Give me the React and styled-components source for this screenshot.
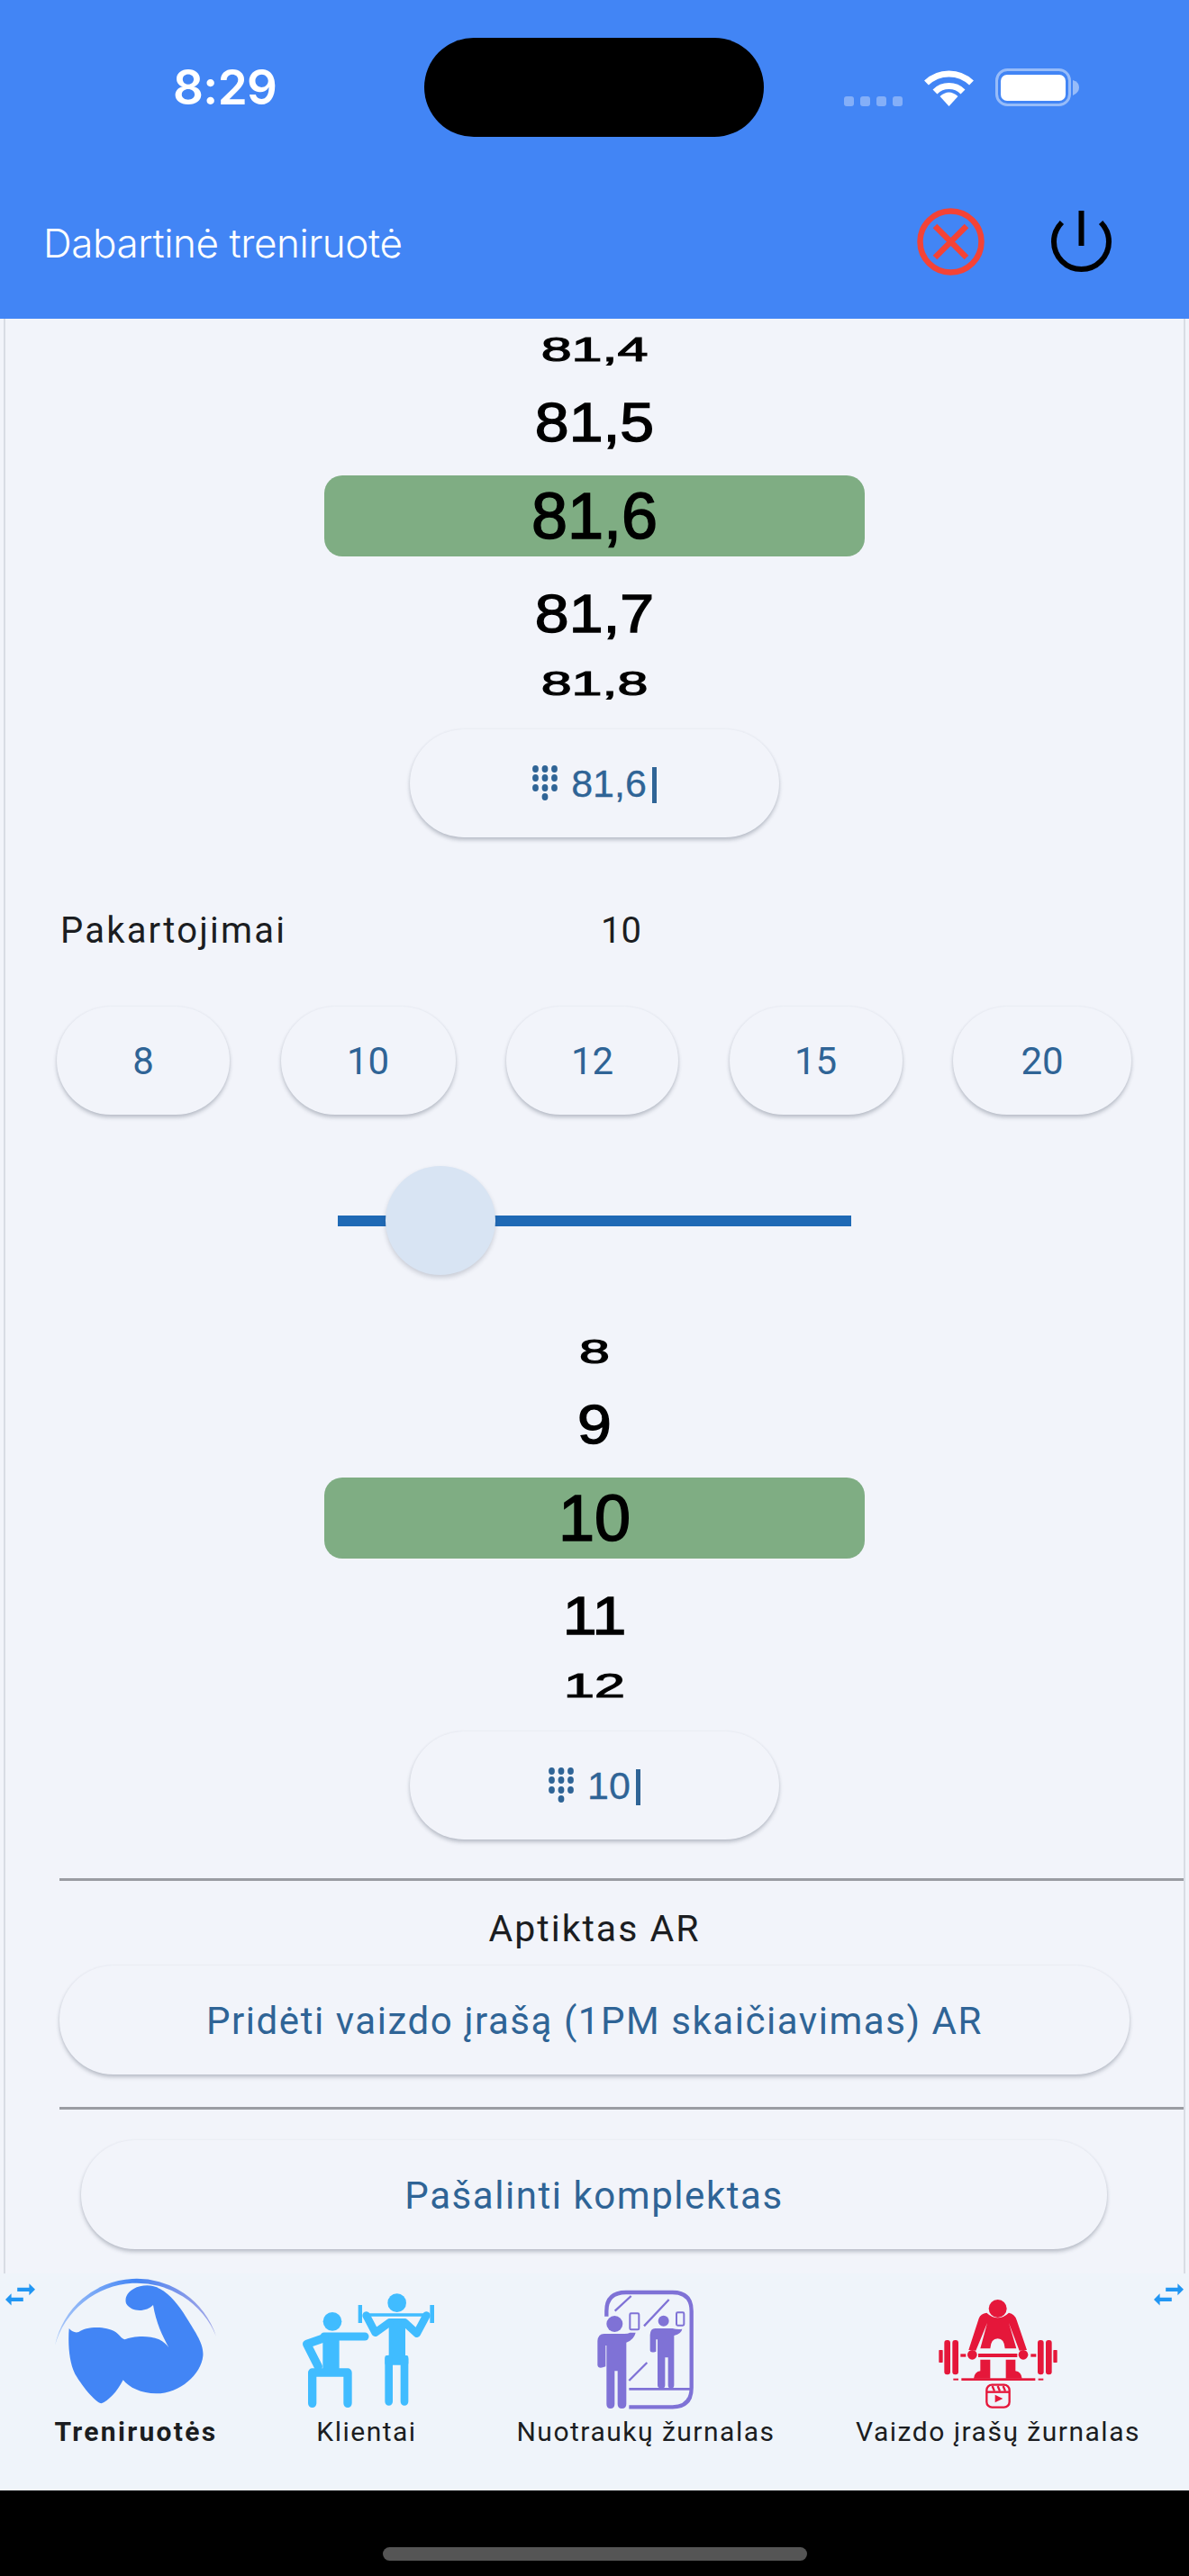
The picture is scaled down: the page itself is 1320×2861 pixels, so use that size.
import React from 'react';
import styled, { createGlobalStyle } from 'styled-components';

const Global = createGlobalStyle`
  html, body { margin: 0; padding: 0; background: #000; }
  * { box-sizing: border-box; }
`;

const Page = styled.div`
  width: 1320px;
  height: 2861px;
  display: flex;
  flex-direction: column;
  background: #000;
  overflow: hidden;
`;

const Header = styled.header`
  height: 354px;
  flex: none;
  background: #4285f5;
  display: flex;
  flex-direction: column;
`;

const StatusRow = styled.div`
  height: 110px;
  margin-top: 42px;
  padding-left: 192px;
  display: flex;
  align-items: center;
`;

const Time = styled.div`
  width: 279px;
  font: 600 53px/1 Inter, "Liberation Sans", sans-serif;
  letter-spacing: -0.6px;
  color: #fff;
`;

const Island = styled.div`
  width: 377px;
  height: 110px;
  border-radius: 55px;
  background: #000;
  flex: none;
`;

const StatusIcons = styled.div`
  margin-left: 89px;
  height: 42px;
  display: flex;
  align-items: flex-end;
  gap: 23px;
`;

const SignalDots = styled.div`
  width: 65px;
  height: 11px;
  display: flex;
  justify-content: space-between;
`;

const SignalDot = styled.span`
  width: 11px;
  height: 11px;
  border-radius: 3px;
  background: rgba(255, 255, 255, 0.35);
`;

const AppBar = styled.div`
  height: 160px;
  margin-top: 42px;
  padding: 0 86px 11px 48px;
  display: flex;
  align-items: center;
  gap: 74px;
`;

const Title = styled.h1`
  flex: 1;
  margin: 0;
  padding-top: 4px;
  font: 300 44px/1.2 Inter, "Liberation Sans", sans-serif;
  letter-spacing: -0.4px;
  color: #fff;
`;

const Main = styled.main`
  height: 2171px;
  flex: none;
  background: #f2f4fa;
  border-left: 4px solid #f2f4fa;
  border-right: 4px solid #f2f4fa;
  padding: 0 2px;
  box-shadow: inset 2px 0 0 #d8dce4, inset -2px 0 0 #d8dce4;
  display: flex;
  flex-direction: column;
  overflow: hidden;
`;

const Wheel = styled.div`
  width: 600px;
  height: 434px;
  margin: 0 auto;
  flex: none;
  display: flex;
  flex-direction: column;
`;

const WheelItem = styled.div`
  height: ${p => p.$h}px;
  margin: ${p => (p.$active ? '14px 0' : '0')};
  flex: none;
  display: flex;
  align-items: center;
  justify-content: center;
  border-radius: 20px;
  background: ${p => (p.$active ? '#7fad83' : 'transparent')};
`;

const WheelText = styled.span`
  display: block;
  font: 400 ${p => p.$size}px/1 "Liberation Sans", Arial, sans-serif;
  -webkit-text-stroke: ${p => p.$stroke}px #000;
  color: #000;
  transform: scaleY(${p => p.$sy});
`;

const InputButton = styled.div`
  width: 410px;
  height: 120px;
  margin: 22px auto 0;
  flex: none;
  border-radius: 60px;
  background: #f2f4fa;
  box-shadow: 0 3px 4px rgba(60, 70, 90, 0.3), 0 0 3px rgba(60, 70, 90, 0.05);
  display: flex;
  align-items: center;
  justify-content: center;
  gap: 15px;
  color: #2f6496;
  font: 400 43px/1 "Liberation Sans", Arial, sans-serif;
  -webkit-text-stroke: 0.3px #2f6496;
`;

const Cursor = styled.span`
  display: inline-block;
  width: 5px;
  height: 40px;
  margin-left: 6px;
  vertical-align: -7px;
  background: #2f6496;
`;

const RepsRow = styled.div`
  margin: 79px 0 59px 61px;
  height: 50px;
  flex: none;
  display: flex;
  align-items: center;
  font: 400 40px/50px Roboto, sans-serif;
  color: #1b1d21;
`;

const RepsLabel = styled.span`
  width: 600px;
  letter-spacing: 2.2px;
`;

const ChipRow = styled.div`
  margin-left: 57px;
  height: 120px;
  flex: none;
  display: flex;
  gap: 56.5px;
`;

const Chip = styled.div`
  width: ${p => p.$w}px;
  height: 120px;
  padding-top: 2px;
  border-radius: 60px;
  background: #f2f4fa;
  box-shadow: 0 3px 4px rgba(60, 70, 90, 0.3), 0 0 3px rgba(60, 70, 90, 0.05);
  display: flex;
  align-items: center;
  justify-content: center;
  color: #2f6496;
  font: 400 42px/1 Roboto, sans-serif;
`;

const Slider = styled.div`
  position: relative;
  width: 570px;
  height: 121px;
  margin: 57px auto 51px;
  flex: none;
  display: flex;
  align-items: center;
`;

const SliderTrack = styled.div`
  width: 100%;
  height: 12px;
  background: #1f69b5;
`;

const SliderThumb = styled.div`
  position: absolute;
  left: 53px;
  top: 0;
  width: 122px;
  height: 121px;
  border-radius: 50%;
  background: #d8e4f3;
  box-shadow: 0 3px 5px rgba(60, 70, 90, 0.22);
`;

const Divider = styled.hr`
  margin: ${p => p.$top}px 0 0 60px;
  height: 3px;
  flex: none;
  border: 0;
  background: #9a9ca2;
`;

const DetectedText = styled.div`
  margin-top: 28px;
  height: 50px;
  flex: none;
  text-align: center;
  font: 400 41px/50px Roboto, sans-serif;
  letter-spacing: 2px;
  color: #1b1d21;
`;

const WideButton = styled.div`
  width: ${p => p.$w}px;
  height: 121px;
  padding-top: 2px;
  margin: ${p => p.$top}px 0 0 ${p => p.$left}px;
  flex: none;
  border-radius: 60px;
  background: #f2f4fa;
  box-shadow: 0 3px 4px rgba(60, 70, 90, 0.3), 0 0 3px rgba(60, 70, 90, 0.05);
  display: flex;
  align-items: center;
  justify-content: center;
  color: #2f6496;
  font: 400 42px/1 Roboto, sans-serif;
  letter-spacing: 1.55px;
`;

const Nav = styled.nav`
  position: relative;
  height: 241px;
  flex: none;
  background: #eff4fa;
  display: grid;
  grid-template-columns: 302px 210px 410px 372px 26px;
`;

const NavItem = styled.div`
  display: flex;
  flex-direction: column;
  align-items: center;
  min-width: 0;
`;

const NavIcon = styled.svg`
  width: 260px;
  height: 155px;
  flex: none;
  overflow: visible;
`;

const NavLabel = styled.span`
  margin-top: 1px;
  white-space: nowrap;
  font: ${p => (p.$active ? 700 : 400)} 30px/40px Roboto, sans-serif;
  letter-spacing: ${p => (p.$active ? '2.3px' : '1.5px')};
  color: #1b1d21;
`;

const SwapIcon = styled.svg`
  position: absolute;
  top: 11px;
  left: ${p => p.$left}px;
  width: 33px;
  height: 25px;
`;

const Bottom = styled.div`
  flex: 1;
  padding-top: 63px;
  display: flex;
  justify-content: center;
`;

const HomeIndicator = styled.div`
  width: 471px;
  height: 15px;
  border-radius: 8px;
  background: #555;
`;

const WifiIcon = () => (
  <svg width="57" height="41" viewBox="0 0 57 41" fill="none" stroke="#fff" strokeWidth="7">
    <path d="M3.5 15 A36 36 0 0 1 53.5 15" />
    <path d="M13 25 A22 22 0 0 1 44 25" />
    <path d="M28.5 41 L18.5 30 Q28.5 21 38.5 30 Z" fill="#fff" stroke="none" />
  </svg>
);

const BatteryIcon = () => (
  <svg width="93" height="42" viewBox="0 0 93 42">
    <rect x="1.5" y="1.5" width="81" height="39" rx="12" fill="none" stroke="rgba(255,255,255,.45)" strokeWidth="3" />
    <rect x="6" y="7" width="72" height="29" rx="7" fill="#fff" />
    <path d="M86 13 Q93 15 93 21 Q93 27 86 30 Z" fill="rgba(255,255,255,.45)" />
  </svg>
);

const CloseIcon = () => (
  <svg width="75" height="75" viewBox="0 0 75 75" fill="none" stroke="#f44336" strokeWidth="6.5">
    <circle cx="37.5" cy="37.5" r="34" />
    <path d="M20 20 L55 55 M55 20 L20 55" />
  </svg>
);

const PowerIcon = () => (
  <svg width="67" height="70" viewBox="0 0 67 70" fill="none" stroke="#000" strokeWidth="6">
    <path d="M33.5 0 V39" />
    <path d="M11.9 13 A30.5 30.5 0 1 0 55.1 13" />
  </svg>
);

const dialDots = [
  [3.5, 4], [14, 4], [24.5, 4],
  [3.5, 14], [14, 14], [24.5, 14],
  [3.5, 25], [14, 25], [24.5, 25],
  [14, 35],
];

const DialIcon = () => (
  <svg width="28" height="40" viewBox="0 0 28 40" fill="#2f6496" stroke="none">
    {dialDots.map(([cx, cy]) => (
      <ellipse key={`${cx}-${cy}`} cx={cx} cy={cy} rx="3.4" ry="3.9" />
    ))}
  </svg>
);

const MuscleIcon = () => (
  <NavIcon viewBox="63 45 780 465">
    <defs>
      <linearGradient id="arcGrad" x1="0" x2="1" y1="0" y2="0">
        <stop offset="0" stopColor="#4285f5" stopOpacity="0.4" />
        <stop offset="0.5" stopColor="#4285f5" />
        <stop offset="1" stopColor="#5a62d8" stopOpacity="0.5" />
      </linearGradient>
    </defs>
    <path d="M183 285 A278 278 0 0 1 720 255 A284 284 0 0 0 183 285 Z" fill="url(#arcGrad)" />
    <path
      fill="#4285f5"
      d="M230 228 Q245 245 262 240 C285 222 350 218 385 240 C398 250 405 262 415 265 C440 255 490 248 530 265 C545 272 555 282 562 292 C540 250 520 210 510 150 C490 172 440 178 420 145 C410 110 450 85 490 85 C540 85 580 130 610 175 C650 240 680 280 676 320 C670 380 600 445 520 445 C470 445 430 425 410 400 C390 440 360 470 338 478 C320 475 280 430 250 380 C230 340 226 280 230 228 Z"
    />
  </NavIcon>
);

const TrainerIcon = () => (
  <NavIcon viewBox="-99 15 780 465">
    <g fill="#40bcff" stroke="none">
      <circle cx="177" cy="175" r="31" />
      <circle cx="392" cy="113" r="31" />
      <rect x="263" y="120" width="13" height="60" />
      <rect x="502" y="120" width="14" height="60" />
      <rect x="145" y="213" width="55" height="125" />
      <rect x="365" y="165" width="55" height="135" />
      <rect x="352" y="288" width="78" height="32" rx="6" />
    </g>
    <g fill="none" stroke="#40bcff" strokeLinecap="round" strokeLinejoin="round">
      <path d="M150 225 H285" strokeWidth="27" />
      <path d="M150 230 L92 250 L130 325" strokeWidth="28" />
      <path d="M110 345 H228 M110 345 V448 M228 345 V448" strokeWidth="28" />
      <path d="M290 153 H490" strokeWidth="11" />
      <path d="M290 155 L320 212 L368 178 M490 155 L458 215 L418 178" strokeWidth="26" />
      <path d="M365 300 V442 M417 300 V442" strokeWidth="26" />
    </g>
  </NavIcon>
);

const MirrorIcon = () => (
  <NavIcon viewBox="-159 -15 780 465">
    <g fill="none" stroke="#7f72d6">
      <path d="M100 128 V110 Q100 48 165 48 H320 Q383 48 383 110 V365 Q383 430 320 430 H175" strokeWidth="13" />
      <path d="M128 110 L182 60 M225 160 L308 72 M175 342 L235 282" strokeWidth="7" />
      <path d="M175 370 H378" strokeWidth="8" />
      <rect x="178" y="118" width="30" height="54" rx="4" strokeWidth="6" />
      <rect x="333" y="115" width="25" height="43" rx="4" strokeWidth="6" />
    </g>
    <g fill="#7f72d6">
      <circle cx="127" cy="153" r="27" />
      <circle cx="290" cy="143" r="18" />
      <path d="M92 186 H160 Q172 186 178 182 H197 Q192 205 166 215 V420 Q166 435 151 435 Q137 435 137 420 V310 H127 V420 Q127 435 113 435 Q100 435 100 420 V225 H97 V295 Q72 305 70 290 V210 Q72 186 92 186 Z" />
      <path d="M262 168 H320 Q335 172 352 170 Q350 185 325 192 V358 Q325 368 315 368 Q305 368 305 358 V265 H295 V358 Q295 368 285 368 Q270 368 270 358 V205 H265 V245 Q245 252 245 240 V190 Q246 168 262 168 Z" />
    </g>
  </NavIcon>
);

const LifterIcon = () => (
  <NavIcon viewBox="-126 -45 780 465">
    <g fill="#e5173a">
      <circle cx="263" cy="72" r="30" />
      <path d="M226 86 Q263 120 300 86 Q320 90 326 110 L360 210 L335 212 L300 120 L325 205 H287 Q285 172 263 172 Q240 172 238 205 H205 L228 120 L190 212 L166 210 L200 105 Q206 88 226 86 Z" />
      <circle cx="178" cy="226" r="16" />
      <circle cx="348" cy="226" r="16" />
      <rect x="139" y="223" width="18" height="10" />
      <rect x="198" y="222" width="130" height="12" />
      <rect x="373" y="223" width="18" height="10" />
      <path d="M205 242 H238 V305 H183 Q186 282 205 280 Z" />
      <path d="M290 242 H322 V280 Q341 282 344 305 H290 Z" />
      <rect x="142" y="304" width="246" height="8" />
      <rect x="115" y="305" width="17" height="6" />
      <rect x="398" y="305" width="17" height="6" />
      <rect x="85" y="177" width="20" height="115" rx="9" />
      <rect x="112" y="177" width="20" height="115" rx="9" />
      <rect x="396" y="177" width="20" height="115" rx="9" />
      <rect x="423" y="177" width="20" height="115" rx="9" />
      <rect x="67" y="210" width="13" height="42" rx="2" />
      <rect x="448" y="210" width="13" height="42" rx="2" />
    </g>
    <g fill="none" stroke="#e5173a" strokeWidth="7">
      <rect x="226" y="326" width="76" height="75" rx="18" />
      <path d="M226 350 H302" />
      <path d="M245 330 L252 347 M263 330 L270 347 M281 330 L288 347" />
    </g>
    <path d="M254 359 L280 372 L254 385 Z" fill="#e5173a" />
  </NavIcon>
);

const SwapArrows = ({ left }) => (
  <SwapIcon $left={left} viewBox="0 0 100 75" fill="#2196f3">
    <path d="M100 20 L80 0 V14 H40 V27 H80 V40 Z" />
    <path d="M0 54 L20 34 V47 H60 V60 H20 V74 Z" />
  </SwapIcon>
);

const WheelPicker = ({ values }) => {
  const specs = [
    { h: 68, size: 61, sy: 0.62, stroke: 1.8 },
    { h: 92, size: 68, sy: 0.9, stroke: 1.6 },
    { h: 90, size: 72, sy: 1, stroke: 1.6, active: true },
    { h: 98, size: 68, sy: 0.88, stroke: 1.6 },
    { h: 58, size: 61, sy: 0.62, stroke: 1.8 },
  ];
  return (
    <Wheel>
      {values.map((value, i) => (
        <WheelItem key={value} $h={specs[i].h} $active={specs[i].active}>
          <WheelText $size={specs[i].size} $sy={specs[i].sy} $stroke={specs[i].stroke}>{value}</WheelText>
        </WheelItem>
      ))}
    </Wheel>
  );
};

const ValueButton = ({ value }) => (
  <InputButton>
    <DialIcon />
    <span>{value}<Cursor /></span>
  </InputButton>
);

const chips = [
  { label: '8', w: 192 },
  { label: '10', w: 194 },
  { label: '12', w: 191 },
  { label: '15', w: 192 },
  { label: '20', w: 198 },
];

export default function App() {
  return (
    <Page>
      <Global />
      <Header>
        <StatusRow>
          <Time>8:29</Time>
          <Island />
          <StatusIcons>
            <SignalDots>
              <SignalDot /><SignalDot /><SignalDot /><SignalDot />
            </SignalDots>
            <WifiIcon />
            <BatteryIcon />
          </StatusIcons>
        </StatusRow>
        <AppBar>
          <Title>Dabartinė treniruotė</Title>
          <CloseIcon />
          <PowerIcon />
        </AppBar>
      </Header>
      <Main>
        <WheelPicker values={['81,4', '81,5', '81,6', '81,7', '81,8']} />
        <ValueButton value="81,6" />
        <RepsRow>
          <RepsLabel>Pakartojimai</RepsLabel>
          <span>10</span>
        </RepsRow>
        <ChipRow>
          {chips.map(c => <Chip key={c.label} $w={c.w}>{c.label}</Chip>)}
        </ChipRow>
        <Slider>
          <SliderTrack />
          <SliderThumb />
        </Slider>
        <WheelPicker values={['8', '9', '10', '11', '12']} />
        <ValueButton value="10" />
        <Divider $top={43} />
        <DetectedText>Aptiktas AR</DetectedText>
        <WideButton $w={1188} $left={60} $top={16}>Pridėti vaizdo įrašą (1PM skaičiavimas) AR</WideButton>
        <Divider $top={36} />
        <WideButton $w={1139} $left={84} $top={34}>Pašalinti komplektas</WideButton>
      </Main>
      <Nav>
        <SwapArrows left={6} />
        <SwapArrows left={1281} />
        <NavItem><MuscleIcon /><NavLabel $active>Treniruotės</NavLabel></NavItem>
        <NavItem><TrainerIcon /><NavLabel>Klientai</NavLabel></NavItem>
        <NavItem><MirrorIcon /><NavLabel>Nuotraukų žurnalas</NavLabel></NavItem>
        <NavItem><LifterIcon /><NavLabel>Vaizdo įrašų žurnalas</NavLabel></NavItem>
      </Nav>
      <Bottom>
        <HomeIndicator />
      </Bottom>
    </Page>
  );
}
